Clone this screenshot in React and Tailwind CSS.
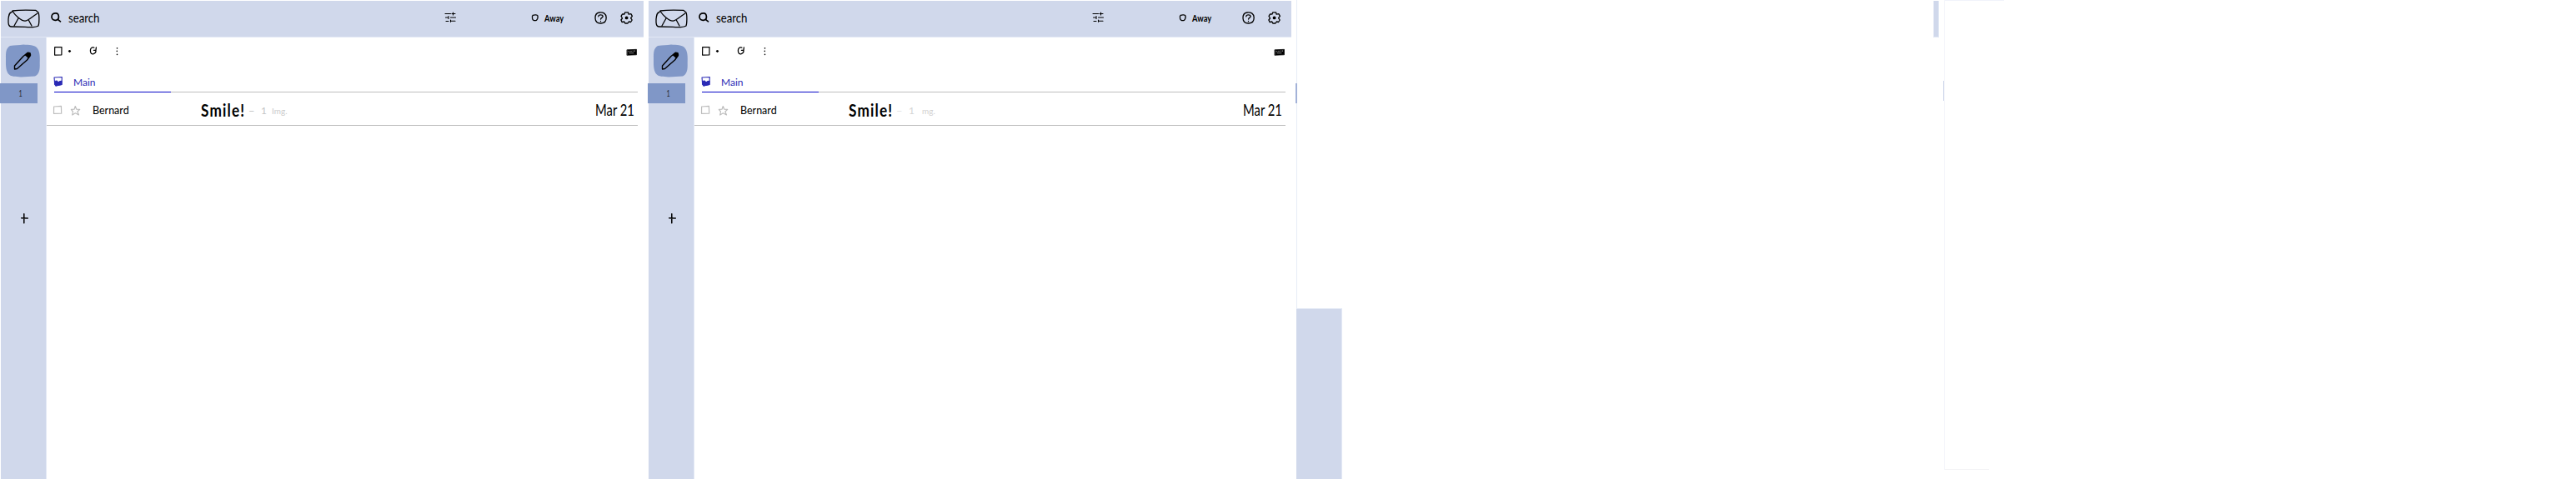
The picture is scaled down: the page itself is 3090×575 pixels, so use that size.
import React from "react";

function Icon({ box, className = "", width = 1.4, children }) {
  const [, , w, h] = box;
  return (
    <svg
      width={w}
      height={h}
      viewBox={box.join(" ")}
      className={"block shrink-0 overflow-visible " + className}
      fill="none"
      stroke="currentColor"
      strokeWidth={width}
      strokeLinecap="round"
      strokeLinejoin="round"
    >
      {children}
    </svg>
  );
}

function Header() {
  return (
    <header className="flex h-[44px] w-[771px] border-b border-[#e3e9f5] bg-[#d0d8eb]">
      <Icon box={[8, 10, 42, 25]} className="ml-[7px] mt-[9px]" width={1.3}>
        <path d="M15 13C22 12 35 12 43 12.4L46 15C47.300 18 47.100 28 46 31C43 32.800 35 32.800 30 32.4L14 32C10 32.300 9.800 28 10 23C10.500 18 11 15 14 14.500Z" />
        <path d="M15 13.500C18 18 25 25 30 25.200C34 25 40 19 45 16M22 22L17 31M34.500 24.500L38 31" />
      </Icon>
      <Icon box={[60, 14, 15, 14]} className="ml-[10px] mt-[13px]" width={1.7}>
        <path d="M67 15.800C63.800 15.700 62 17.500 62 20.200C62 23 64 24.700 67 24.300C69.500 24 70.600 22.600 70.400 19.800C70.200 17 69.400 15.900 67 15.800ZM70 23.800L72.500 25.800" />
      </Icon>
      <span className="ml-[7px] mt-[10px] h-[20px] w-[39px] origin-left scale-x-[0.88] whitespace-nowrap text-[15px] leading-[20px]">search</span>
      <Icon box={[532, 13, 17, 15]} className="ml-[411px] mt-[12px]" width={1.1}>
        <path d="M534 16.500H540.500M542 16.500H546M543.500 15V18M534.500 21H537M538 19.500V22.500M540.500 21H546.500M535 25.500H538M541 25.300H546M540.500 24V26.300" />
      </Icon>
      <Icon box={[636, 16, 11, 11]} className="ml-[87px] mt-[15px]" width={1.3}>
        <path d="M639.200 18.300C641.500 17.600 644.500 17.800 645 19C645.400 21 644.900 23 643.500 24.300C641.500 25.100 639.200 24.700 638.600 22.500C638.300 21 638.400 19 639.200 18.300Z" />
      </Icon>
      <span className="ml-[6px] mt-[12px] h-[18px] w-[25px] origin-left scale-x-[0.85] whitespace-nowrap text-[11px] font-bold leading-[18px]">Away</span>
      <Icon box={[712, 13, 17, 17]} className="ml-[34px] mt-[12px]" width={1.3}>
        <path d="M719 15C715 15.500 713.800 18 714 22C714.200 26 716.500 28.200 721 28C725 27.800 727.300 25.500 727.200 21C727 16.500 724 14.500 719 15ZM717.800 19.800C718 17.500 722.700 17.300 723.200 19.500C723.300 21.300 720.700 21.300 720.600 23" />
        <path d="M720.500 25.300V25.700" />
      </Icon>
      <Icon box={[743, 13, 17, 17]} className="ml-[14px] mt-[12px]" width={1.3}>
        <path d="M749 17L749.800 14.800H753.500L754.200 17.200L757 16.700L758.400 19.400L756.600 21.600L758.200 24L756.600 26.500L754.300 26L753 28H749.800L748.800 26L746.200 26.600L744.900 24L746.500 22L745 19.300L746.600 16.800Z" />
        <circle cx="751.600" cy="21.400" r="1.300" fill="currentColor" />
      </Icon>
    </header>
  );
}

function Sidebar() {
  return (
    <aside className="flex w-[56px] shrink-0 flex-col">
      <div className="ml-px flex h-[55px] w-[55px] border-r border-[#e3e9f5] bg-[#d0d8eb] pl-[5px] pt-[8px]">
        <Icon box={[6, 53, 43, 41]} width={1.4}>
          <path d="M12 55C18 54 23 54.500 28 53.500C35 54 41 54 44 57C48 61 48 68 47.700 76C48 84 47 89 42 91.500C36 92 31 92 25 92.500C19 91.500 13 93 9.500 88C6.500 83 7 76 7 70C7 63 7 58 12 55Z" fill="#8097c7" stroke="none" />
          <path d="M17.500 79L28 67.500L33 63.500L36.500 66.500L32.500 72L20.500 82.500L17.500 83Z" />
          <path d="M30.500 66L33.500 63.300L36 63.600L36.500 65.700L34 69Z" fill="currentColor" />
        </Icon>
      </div>
      <div className="flex h-[24px] border-r border-[#e3e9f5] bg-[#d0d8eb]">
        <div className="h-[24px] w-[45px] bg-[#8097c7] pl-[21px] pt-[4px] text-[12px] leading-[16px] text-[#20232c]">
          <span className="inline-block scale-x-[0.6]">1</span>
        </div>
      </div>
      <div className="ml-px w-[55px] grow border-r border-[#e3e9f5] bg-[#d0d8eb] pl-[23px] pt-[131px]">
        <Icon box={[24, 255, 11, 14]} width={1.5}>
          <path d="M28.800 256.700V267.700M25.700 261.700L33.300 262" />
        </Icon>
      </div>
    </aside>
  );
}

function Inbox({ faint = false }) {
  return (
    <main className="flex w-[709px] flex-col bg-white">
      <div className="flex h-[36px]">
        <Icon box={[64, 55, 12, 13]} className="ml-[8px] mt-[10px]" width={1.2}>
          <path d="M65.700 56.600L74 56.500L73.900 65.800L65.600 66.100Z" />
        </Icon>
        <Icon box={[81, 59, 5, 5]} className="ml-[5px] mt-[14px]" width={1.8}>
          <path d="M82.700 61.300H84.300M83.500 61V62" />
        </Icon>
        <Icon box={[106, 55, 12, 12]} className="ml-[20px] mt-[10px]" width={1.3}>
          <path d="M112.800 57.200C110 56.300 108.300 58 108.400 61C108.500 64 110 65.300 112.300 64.700C114.500 63.800 115.300 62 114.900 60.200M115.400 56.800L115 60.200L112.400 60.300" />
        </Icon>
        <Icon box={[138, 56, 5, 11]} className="ml-[20px] mt-[11px]" width={1.5}>
          <path d="M140.500 57.700V57.900M140.300 61.300V61.600M140.500 65.200V65.400" />
        </Icon>
        <Icon box={[751, 58, 14, 10]} className="ml-auto mt-[13px]" width={0.7}>
          <path d="M752.300 59.800L763.500 59.300V65.800L752.300 66.300Z" fill="currentColor" />
          <path d="M754 61.700H755M756.500 61.400H757.500M759 61.200H760M755 63.700H760M761.500 60.800V61.500" stroke="#bbb" />
        </Icon>
      </div>
      <div className="flex h-[29px] w-[709px] text-[#2a2ab5]">
        <Icon box={[63, 91, 13, 14]} className="ml-[7px] mt-[10px]" width={1.1}>
          <path d="M65 93L74.300 92.500L74 101.500L67 103L65.700 101Z" />
          <path d="M65.500 97.500L68 97L70 99L72 97.500L74 97.300V101.500L67 103L65.500 101Z" fill="currentColor" />
        </Icon>
        <span className="ml-[12px] mt-[9px] h-[18px] whitespace-nowrap text-[12px] leading-[18px]">Main</span>
      </div>
      <div className="ml-[9px] flex h-px w-[700px] bg-[#bdbdbd]">
        <div className="h-px w-[140px] bg-[#0808c8]" />
      </div>
      <div className="flex h-[40px] w-[709px] border-b border-[#bdbdbd]">
        <Icon box={[63, 125, 12, 13]} className="ml-[7px] mt-[14px] text-[#bdbdbd]" width={1.2}>
          <path d="M64.600 128L73.400 127.300L73.700 136.200L64.500 136.300Z" />
        </Icon>
        <Icon box={[84, 126, 13, 14]} className="ml-[9px] mt-[15px] text-[#bdbdbd]" width={1.2}>
          <path d="M90.300 127.500L91.800 131.200L95.700 131.400L92.900 134L94.500 138L90.400 135.800L86.700 138L87.500 134L85.300 131.400L89 131.200Z" />
        </Icon>
        <span className="ml-[14px] mt-[13px] h-[18px] w-[48px] whitespace-nowrap text-[12.5px] leading-[18px]">Bernard</span>
        <span className="ml-[82px] mt-[8px] h-[26px] w-[57px] origin-left scale-x-[0.82] whitespace-nowrap text-[21px] font-bold leading-[26px] tracking-[1.4px]">Smile!</span>
        <span className={"mt-[13px] h-[18px] w-[15px] text-[13px] leading-[18px] " + (faint ? "text-[#e4e4e4]" : "text-[#c4c4c4]")}>–</span>
        <span className={"mt-[13px] h-[18px] w-[13px] text-[12px] leading-[18px] " + (faint ? "text-[#d4d4d4]" : "text-[#c4c4c4]")}>1</span>
        <span className={"mt-[13px] h-[18px] w-[20px] whitespace-nowrap text-[10px] leading-[18px] " + (faint ? "pl-[3px] text-[#d0d0d0]" : "text-[#cacaca]")}>{faint ? "mg." : "Img."}</span>
        <span className="ml-auto mr-[3px] mt-[9px] h-[24px] w-[48px] origin-left scale-x-[0.8] whitespace-nowrap text-[18.5px] leading-[24px]">Mar 21</span>
      </div>
    </main>
  );
}

function MailPanel({ faint }) {
  return (
    <section className="flex h-[575px] w-[777px] shrink-0 flex-col pt-px">
      <div className="pl-px">
        <Header />
      </div>
      <div className="flex grow">
        <Sidebar />
        <Inbox faint={faint} />
      </div>
    </section>
  );
}

export default function App() {
  return (
    <div className="flex h-[575px] w-[3090px] overflow-hidden bg-white font-[Lato,sans-serif] text-black">
      <MailPanel />
      <MailPanel faint />
      <section className="flex w-[765px] shrink-0 flex-col">
        <div className="ml-px h-[100px] w-px bg-[#e6ecf7]" />
        <div className="h-[24px] w-[2px] bg-[#a3b2d8]" />
        <div className="ml-px h-[246px] w-px bg-[#e6ecf7]" />
        <div className="ml-px h-[205px] w-[55px] border-r border-t border-[#e3e9f5] bg-[#d0d8eb]" />
      </section>
      <section className="flex w-[13px] shrink-0 pt-px">
        <div className="h-[44px] w-[7px] shrink-0 border border-t-0 border-[#e3e9f5] bg-[#d0d8eb]" />
        <div className="ml-[5px] mt-[96px] h-[24px] w-px shrink-0 bg-[#cdd6ea]" />
      </section>
      <section className="flex h-[564px] w-[72px] shrink-0 flex-col border-l border-[#f5f6fb]">
        <div className="h-px w-[71px] bg-[#f1f3fa]" />
        <div className="mt-auto h-px w-[53px] bg-[#f3f3f5]" />
      </section>
    </div>
  );
}
